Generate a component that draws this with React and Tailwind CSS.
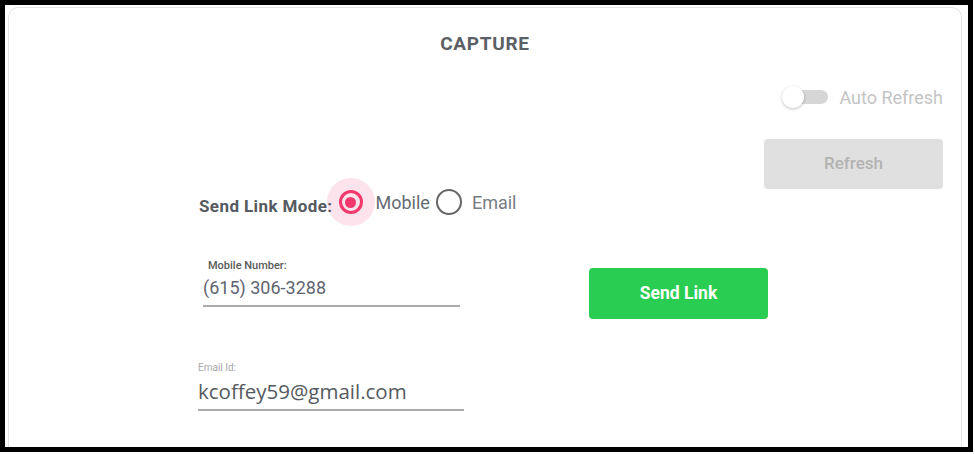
export default function App() {
  return (
    <div className="h-[454px] w-[975px] bg-white" style={{ fontFamily: 'Roboto, "Liberation Sans", sans-serif' }}>
      <div className="h-[452px] w-[973px] overflow-hidden border-[5px] border-black bg-white">
        <div className="ml-[3px] mr-[6px] mt-[2px] h-[460px] rounded-t-[10px] border border-b-0 border-[#e4e4e4]">
          {/* title */}
          <div className="pt-[24px] text-center text-[19px] font-bold leading-[24px] tracking-[0.7px] text-[#5b5f66]">
            CAPTURE
          </div>

          {/* auto refresh toggle */}
          <div className="mt-[29px] flex h-[24px] items-center justify-end pr-[18px]">
            <div className="relative mr-[11px] h-[22px] w-[46px]">
              <div className="absolute left-[6px] top-[4px] h-[14px] w-[40px] rounded-full bg-[#d6d6d6]" />
              <div className="absolute left-0 top-0 h-[22px] w-[22px] rounded-full bg-white shadow-[0_1px_3px_rgba(0,0,0,0.25)]" />
            </div>
            <span className="text-[18px] text-[#c4c4c4]">Auto Refresh</span>
          </div>

          {/* send link mode + refresh */}
          <div className="mt-[30px] flex items-start justify-between pr-[18px]">
            <div className="ml-[190px] box-content flex h-[48px] items-center pt-[39px]">
              <span className="relative z-10 mr-[-6px] mt-[9px] text-[17px] font-bold tracking-[0.4px] text-[#555a60]">
                Send Link Mode:
              </span>
              <div className="flex h-[48px] w-[48px] items-center justify-center rounded-full bg-[#fde3ec]">
                <div className="flex h-[24px] w-[24px] items-center justify-center rounded-full border-[3px] border-[#f2386c]">
                  <div className="h-[11px] w-[11px] rounded-full bg-[#f2386c]" />
                </div>
              </div>
              <span className="ml-[1px] text-[18px] text-[#666b72]">Mobile</span>
              <div className="ml-[6px] h-[26px] w-[26px] rounded-full border-[2.5px] border-[#666]" />
              <span className="ml-[10px] text-[18px] text-[#777c84]">Email</span>
            </div>
            <button className="h-[50px] w-[179px] rounded-[4px] bg-[#e0e0e0] text-[17px] font-medium text-[#b3b3b3]">
              Refresh
            </button>
          </div>

          {/* mobile number + send link */}
          <div className="mt-[33px] flex items-start">
            <div className="ml-[194px] w-[257px] border-b-2 border-[#acacac] pb-[6px]">
              <div className="pl-[5px] text-[11px] font-medium leading-[13px] text-[#5a5a5a]">Mobile Number:</div>
              <div className="mt-[5px] text-[18px] leading-[22px] text-[#5f6571]">(615) 306-3288</div>
            </div>
            <button className="ml-[129px] mt-[9px] h-[51px] w-[179px] rounded-[4px] bg-[#29cd51] text-[17.5px] font-bold text-white">
              Send Link
            </button>
          </div>

          {/* email */}
          <div className="ml-[189px] mt-[43px] w-[266px] border-b-2 border-[#acacac] pb-[5px]">
            <div className="text-[10px] leading-[12px] text-[#a8a8a8]">Email Id:</div>
            <div
              className="mt-[4px] text-[20.5px] leading-[26px] text-[#555a60]"
              style={{ fontFamily: '"Open Sans", "Liberation Sans", sans-serif' }}
            >
              kcoffey59@gmail.com
            </div>
          </div>
        </div>
      </div>
    </div>
  );
}
